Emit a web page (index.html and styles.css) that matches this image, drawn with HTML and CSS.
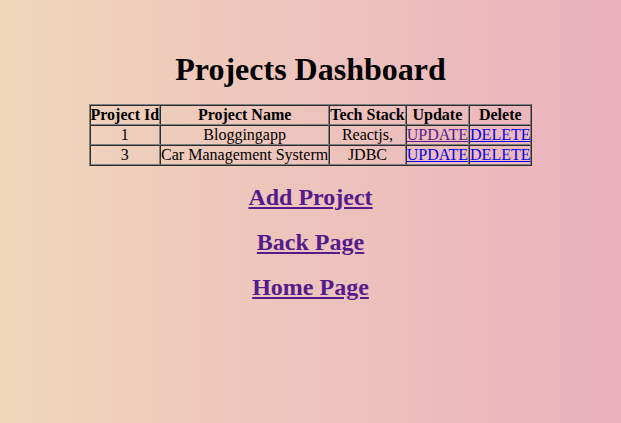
FILE: index.html
```html
<!DOCTYPE html>
<html>
<head>
<meta charset="utf-8">
<title>Projects Dashboard</title>
<link rel="stylesheet" href="styles.css">
</head>
<body>
<div class="page">
  <h1 class="title">Projects Dashboard</h1>
  <table class="projects">
    <thead>
      <tr><th>Project Id</th><th>Project Name</th><th>Tech Stack</th><th>Update</th><th>Delete</th></tr>
    </thead>
    <tbody>
      <tr><td>1</td><td>Bloggingapp</td><td>Reactjs,</td><td><a class="visited" href="#u1">UPDATE</a></td><td><a href="#d1">DELETE</a></td></tr>
      <tr><td>3</td><td>Car Management Systerm</td><td>JDBC</td><td><a href="#u3">UPDATE</a></td><td><a href="#d3">DELETE</a></td></tr>
    </tbody>
  </table>
  <h2 class="nav"><a class="visited" href="#add">Add Project</a></h2>
  <h2 class="nav"><a class="visited" href="#back">Back Page</a></h2>
  <h2 class="nav"><a class="visited" href="#home">Home Page</a></h2>
</div>
</body>
</html>
```
FILE: styles.css
```css
html, body {
  margin: 0;
  height: 100%;
}
body {
  font-family: "Liberation Serif", "Times New Roman", serif;
  background: linear-gradient(to right, #efd6bb, #ebb1bd);
  color: #000;
}
.page {
  padding-top: 51px;
  text-align: center;
}
.title {
  font-size: 32px;
  font-weight: bold;
  margin: 0 0 16px;
}
.projects {
  margin: 0 auto;
  border-collapse: separate;
  border-spacing: 0;
  border: 1px outset grey;
  font-size: 16px;
}
.projects th,
.projects td {
  border: 1px inset grey;
  padding: 0;
  text-align: center;
  line-height: 18px;
}
a {
  color: #0000ee;
}
a.visited {
  color: #551a8b;
}
.nav {
  font-size: 24px;
  font-weight: bold;
  margin: 18px 0;
}
```
